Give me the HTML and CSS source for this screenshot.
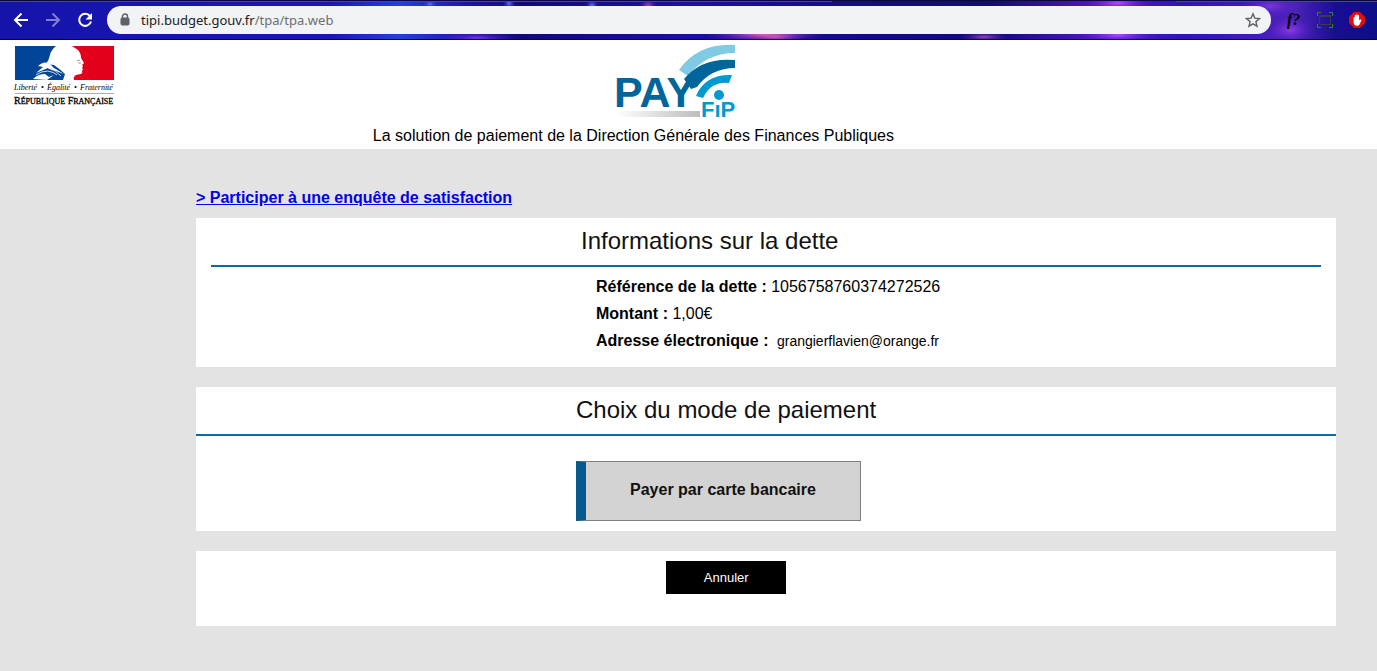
FILE: index.html
```html
<!DOCTYPE html>
<html lang="fr">
  <head>
    <meta charset="UTF-8" />
    <meta name="viewport" content="width=device-width, initial-scale=1" />
    <title>PayFiP</title>
    <link rel="stylesheet" href="styles.css">
  </head>
  <body>
    <!-- barre du navigateur -->
    <div class="browser-bar">
      <svg class="browser-sky" preserveAspectRatio="none" viewBox="0 0 1377 40" aria-hidden="true">
        <defs>
          <linearGradient id="sky">
            <stop offset="0" stop-color="#1414aa" />
            <stop offset="0.24" stop-color="#1a16b4" />
            <stop offset="0.29" stop-color="#2440d8" />
            <stop offset="0.34" stop-color="#1c14a4" />
            <stop offset="0.38" stop-color="#120a72" />
            <stop offset="0.5" stop-color="#1c10a0" />
            <stop offset="0.6" stop-color="#160c88" />
            <stop offset="0.72" stop-color="#120a78" />
            <stop offset="0.8" stop-color="#5418c0" />
            <stop offset="0.86" stop-color="#2e14b8" />
            <stop offset="0.94" stop-color="#4c22b8" />
            <stop offset="0.97" stop-color="#180e90" />
            <stop offset="1" stop-color="#0c0e88" />
          </linearGradient>
          <radialGradient id="pink"><stop offset="0" stop-color="#f070c8" /><stop offset="1" stop-color="#8020b0" stop-opacity="0" /></radialGradient>
          <radialGradient id="violet"><stop offset="0" stop-color="#b44cff" /><stop offset="1" stop-color="#5418d0" stop-opacity="0" /></radialGradient>
          <radialGradient id="blue"><stop offset="0" stop-color="#6070ff" /><stop offset="1" stop-color="#2020c0" stop-opacity="0" /></radialGradient>
        </defs>
        <rect width="1377" height="40" fill="url(#sky)" />
        <ellipse cx="765" cy="34" rx="60" ry="9" fill="url(#pink)" />
        <ellipse cx="477" cy="38" rx="40" ry="6" fill="url(#violet)" opacity="0.6" />
        <ellipse cx="775" cy="37" rx="30" ry="5" fill="url(#pink)" opacity="0.6" />
        <ellipse cx="984" cy="37" rx="24" ry="5" fill="url(#pink)" opacity="0.6" />
        <ellipse cx="1118" cy="35" rx="40" ry="8" fill="url(#violet)" />
        <ellipse cx="1118" cy="3" rx="34" ry="9" fill="url(#violet)" />
        <ellipse cx="509" cy="3" rx="7" ry="9" fill="url(#blue)" />
        <ellipse cx="592" cy="5" rx="7" ry="6" fill="url(#blue)" />
        <ellipse cx="430" cy="4" rx="8" ry="6" fill="url(#blue)" />
        <ellipse cx="648" cy="5" rx="9" ry="6" fill="url(#pink)" opacity="0.6" />
        <ellipse cx="1270" cy="6" rx="30" ry="12" fill="url(#violet)" opacity="0.5" />
        <ellipse cx="1290" cy="30" rx="26" ry="14" fill="url(#violet)" opacity="0.6" />
        <rect width="1377" height="1" fill="#0a0640" />
        <rect y="1" width="832" height="1" fill="#4c4690" />
        <rect x="1176" y="1" width="201" height="1" fill="#4c4690" />
        <rect y="39" width="1377" height="1" fill="#06053c" />
      </svg>
      <button class="nav-btn" type="button" aria-label="Retour">
        <svg width="16" height="16" viewBox="0 0 16 16" fill="none" stroke="#fff" stroke-width="2"><path d="M15 8H2M8.500 1.500L2 8l6.500 6.500" /></svg>
      </button>
      <button class="nav-btn" type="button" aria-label="Avancer">
        <svg width="16" height="16" viewBox="0 0 16 16" fill="none" stroke="#8080d2" stroke-width="2"><path d="M1 8h13M7.500 1.500L14 8l-6.500 6.500" /></svg>
      </button>
      <button class="nav-btn" type="button" aria-label="Actualiser">
        <svg width="16" height="16" viewBox="0 0 16 16"><path d="M13 4.200A6 6 0 1 0 14 9.500" fill="none" stroke="#fff" stroke-width="2" /><path d="M15 1v6.500H8.500z" fill="#fff" /></svg>
      </button>
      <div class="address">
        <svg width="10" height="14" viewBox="0 0 10 14"><rect x="1" y="5" width="8" height="7" rx="1" fill="#5f6368" stroke="#5f6368" /><path d="M2.500 5V3.500a2.500 2.500 0 0 1 5 0V5" fill="none" stroke="#5f6368" stroke-width="1.500" /></svg>
        <span class="url">tipi.budget.gouv.fr<span class="url-path">/tpa/tpa.web</span></span>
        <svg width="16" height="16" viewBox="0 0 16 16"><path d="M8 1.800l1.800 4.300 4.700.4-3.600 3.100 1.100 4.600L8 11.800l-4 2.400 1.100-4.600L1.500 6.500l4.700-.4z" fill="none" stroke="#5f6368" stroke-width="1.400" /></svg>
      </div>
      <div class="extensions">
        <span class="ext-font">f?</span>
        <svg width="16" height="16" viewBox="0 0 16 16" fill="none"><path d="M.5 4V.5H4M12 .5h3.500V4M15.500 12v3.500H12M4 15.500H.5V12" stroke="#2a8a34" /><path d="M2.500 3.500h11v9h-11zM2 4.500h12" stroke="#3c3c3c" /></svg>
        <svg width="16" height="16" viewBox="0 0 16 16"><path d="M5 0h6l5 5v6l-5 5H5l-5-5V5z" fill="#e40d0d" /><path d="M4.600 9V5.200a.7.7 0 0 1 1.300 0V3.500a.7.7 0 0 1 1.400 0V3a.7.7 0 0 1 1.400 0v.6a.7.7 0 0 1 1.400 0v5l.9-1a.8.8 0 0 1 1.300.8l-1.800 4Q9.800 13.800 8 13.800 4.600 13.800 4.600 10z" fill="#fff" /></svg>
      </div>
    </div>

    <header class="header">
      <svg class="marianne" width="110" height="62" viewBox="0 0 110 62" role="img" aria-label="République Française">
        <path d="M1 0H42Q37 4 36 9 35 14 32 18L40 19Q47 24 51 28L49 34H1z" fill="#024596" />
        <path d="M58 0h42v34H60q-1-3 2-5l5-1q2-1 1-3l1-2-1-1 1-2-1-1 2-2-3-5q0-5-3-8l-6-4z" fill="#e2001a" />
        <path d="M24 20q5-5 11-3l5 5 10 6-8-3-8-3-12 5 7-6z" fill="#fff" />
        <path d="M19 33q5-5 12-5l4 3 5-2-7 5z" fill="#fff" />
        <path d="M22 29q5-4 12-4 6 1 9 4M34 22q8 2 13 8" stroke="#fff" stroke-width="0.800" fill="none" />
        <path d="M63 15l3-1M64 17h3" stroke="#777" stroke-width="0.700" fill="none" />
        <text class="motto" y="44"><tspan x="0">Liberté</tspan> <tspan x="27">•</tspan> <tspan x="33">Égalité</tspan> <tspan x="60">•</tspan> <tspan x="66">Fraternité</tspan></text>
        <path d="M1 47.500h99" stroke="#999" stroke-width="0.800" />
        <text class="republique" x="0" y="58">R<tspan class="cap">ÉPUBLIQUE</tspan> F<tspan class="cap">RANÇAISE</tspan></text>
      </svg>
      <div class="brand">
        <svg class="payfip" width="124" height="80" viewBox="0 0 124 80" role="img" aria-label="PayFiP">
          <defs>
            <linearGradient id="shade"><stop offset="0" stop-color="#fff" /><stop offset="1" stop-color="#bdbdbd" /></linearGradient>
          </defs>
          <rect x="2" y="67" width="84" height="6" fill="url(#shade)" />
          <text class="pay" x="0" y="63">PAY</text>
          <path d="M65 26Q84-1 121 1V9Q92 9 74 32z" fill="#80cae3" />
          <path d="M70 35Q88 13 121 16V24Q97 24 83 43L77 45z" fill="#00659b" />
          <path d="M82 52Q91 30 118 31L115 39Q97 37 89 54z" fill="#0099d0" />
          <text class="fip" x="87" y="73">FıP</text>
          <circle cx="105" cy="51" r="5" fill="#0099d0" />
        </svg>
        <p class="tagline">La solution de paiement de la Direction Générale des Finances Publiques</p>
      </div>
    </header>

    <main class="main">
      <a class="survey" href="#">&gt; Participer à une enquête de satisfaction</a>

      <section class="panel panel-debt">
        <h1 class="panel-title">Informations sur la dette</h1>
        <div class="details">
          <div class="detail"><b>Référence de la dette :</b> 1056758760374272526</div>
          <div class="detail"><b>Montant :</b> 1,00€</div>
          <div class="detail">
            <label for="mail">Adresse électronique :</label>
            <input id="mail" class="mail" type="email" value="grangierflavien@orange.fr" readonly />
          </div>
        </div>
      </section>

      <section class="panel panel-mode">
        <h1 class="panel-title">Choix du mode de paiement</h1>
        <button class="pay-card" type="button">Payer par carte bancaire</button>
      </section>

      <section class="panel panel-cancel">
        <button class="cancel" type="button">Annuler</button>
      </section>
    </main>
  </body>
</html>
```

FILE: styles.css
```css
* {
  box-sizing: border-box;
}

body {
  margin: 0;
  min-height: 100vh;
  background: #e3e3e3;
  color: #000;
  font: 16px/27px "Liberation Sans", Arial, sans-serif;
}

button {
  font-family: inherit;
  cursor: pointer;
}

/* navigateur */
.browser-bar {
  position: relative;
  display: flex;
  align-items: center;
  height: 40px;
  padding: 0 12px 0 13px;
  gap: 16px;
}

.browser-bar > * {
  position: relative;
}

.browser-bar .browser-sky {
  position: absolute;
  top: 0;
  left: 0;
  width: 100%;
  height: 100%;
}

.nav-btn {
  display: flex;
  padding: 0;
  border: 0;
  background: none;
}

.address {
  display: flex;
  flex: 1;
  align-items: center;
  gap: 11px;
  height: 28px;
  margin-left: -2px;
  padding: 0 10px 0 13px;
  border-radius: 14px;
  background: #f1f3f4;
}

.url {
  flex: 1;
  color: #202124;
  font: 13px/20px "Noto Sans", "Open Sans", sans-serif;
}

.url-path {
  color: #6b6f73;
}

.extensions {
  display: flex;
  align-items: center;
  gap: 16px;
}

.ext-font {
  width: 14px;
  color: #000;
  font: italic bold 16px/20px "Liberation Serif", serif;
}

/* en-tête */
.header {
  display: grid;
  grid-template-columns: 27% 1fr;
  height: 109px;
  background: #fff;
}

.marianne {
  margin: 6px 0 0 14px;
}

.motto {
  font: italic 8px "Liberation Serif", serif;
}

.republique {
  stroke: #000;
  stroke-width: 0.3px;
  font: 10px "Liberation Serif", serif;
}

.republique .cap {
  font-size: 8px;
}

.payfip {
  display: block;
  margin: 4px 0 0 242px;
}

.pay,
.fip {
  font-family: "Liberation Sans", Arial, sans-serif;
  font-weight: bold;
}

.pay {
  fill: #00659b;
  font-size: 43px;
}

.fip {
  fill: #0099d0;
  font-size: 22px;
}

.tagline {
  margin: -2px 0 0 1px;
}

/* contenu */
.main {
  padding: 35px 41px 43px 196px;
}

.survey {
  display: block;
  width: fit-content;
  margin-bottom: 7px;
  color: #00e;
  font-weight: bold;
}

.panel {
  margin-bottom: 20px;
  background: #fff;
}

.panel-debt {
  padding: 0 15px 13px;
}

.panel-title {
  margin: 0;
  padding: 10px 0 11px 33.333%;
  border-bottom: 2px solid #0f6aa3;
  color: #111;
  font-size: 24px;
  font-weight: normal;
  line-height: 26px;
}

.details {
  margin-left: 33.333%;
  padding: 6px 15px 0;
}

.detail b,
.detail label {
  font-weight: bold;
}

.mail {
  width: 200px;
  padding: 0 4px;
  border: 0;
  background: none;
  color: #000;
  font: 14px/20px "Liberation Sans", Arial, sans-serif;
}

.panel-mode {
  padding-bottom: 10px;
}

.pay-card {
  display: block;
  width: 25%;
  height: 60px;
  margin: 25px 0 0 33.333%;
  padding: 0 0 2px;
  border: 1px solid gray;
  border-left: 10px solid #075a8c;
  background: #d3d3d3;
  color: #111;
  font-size: 16px;
  font-weight: bold;
}

.panel-cancel {
  padding: 10px 0 32px;
}

.cancel {
  display: block;
  width: 120px;
  height: 33px;
  margin-left: 41.25%;
  border: 0;
  background: #000;
  color: #fff;
  font-size: 13px;
}
```
